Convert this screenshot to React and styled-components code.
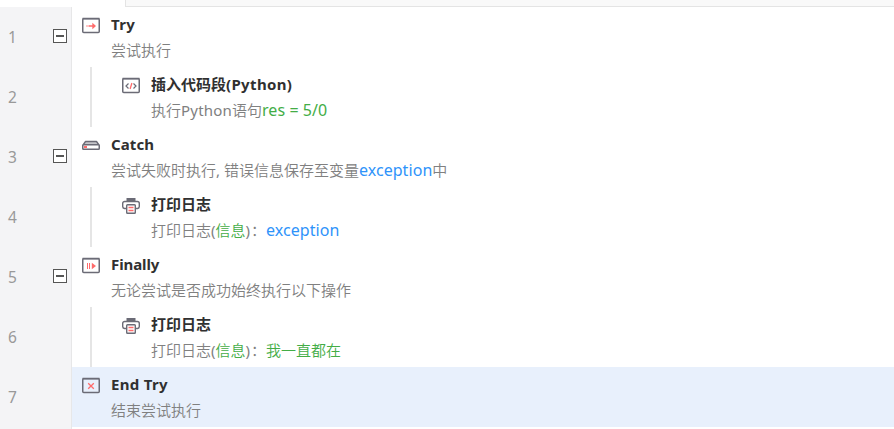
import React from 'react';
import styled, { createGlobalStyle } from 'styled-components';

const GlobalStyle = createGlobalStyle`
  * { box-sizing: border-box; }
  body { margin: 0; background: #fff; overflow: hidden; }
`;

const Editor = styled.div`
  width: 894px;
  height: 429px;
  display: flex;
  flex-direction: column;
  background: #fff;
  overflow: hidden;
  font-family: "Noto Sans", "Noto Sans CJK SC", sans-serif;
  font-size: 15px;
`;

const TabStrip = styled.div`
  display: flex;
  justify-content: flex-end;
  flex: 0 0 7px;
`;

const TabRest = styled.div`
  width: 769px;
  background: #f9f9f9;
  border-left: 1px solid #e4e4e4;
  border-bottom: 1px solid #e4e4e4;
`;

const Body = styled.div`
  display: flex;
  flex: 1;
  min-height: 0;
`;

const Gutter = styled.div`
  flex: 0 0 72px;
  background: #f4f4f6;
  border-right: 1px solid #e7e7e8;
`;

const GutterRow = styled.div`
  height: 60px;
  display: flex;
  justify-content: space-between;
  align-items: center;
  padding: 0 4px 0 8px;
  color: #999;
`;

const LineNumber = styled.span`
  font-size: 15.5px;
  line-height: 20px;
`;

const Toggle = styled.span`
  width: 14px;
  height: 14px;
  border: 1px solid #555;
  background: #fff;
  display: flex;
  align-items: center;
  justify-content: center;
  margin-bottom: 2px;
  &::before {
    content: "";
    width: 8px;
    height: 2px;
    background: #555;
  }
`;

const Steps = styled.div`
  flex: 1;
  min-width: 0;
`;

const Step = styled.div`
  height: 60px;
  display: flex;
  padding-left: ${(p) => (p.$nested ? 18 : 9)}px;
  background: ${(p) => (p.$selected ? '#e8f0fc' : 'transparent')};
`;

const Guide = styled.div`
  width: 2px;
  margin-right: 29px;
  background: #e5e5e5;
`;

const IconSlot = styled.div`
  width: 20px;
  margin-right: 10px;
  padding-top: 8px;
  svg { display: block; }
`;

const StepText = styled.div`
  padding-top: 4px;
  white-space: nowrap;
`;

const Title = styled.div`
  height: 26px;
  line-height: 26px;
  font-weight: 700;
  color: #303030;
  letter-spacing: ${(p) => p.$track || 0}px;
`;

const Detail = styled.div`
  height: 26px;
  line-height: 26px;
  color: #808080;
  font-family: "Noto Sans", "Noto Sans CJK SC DemiLight", "Noto Sans CJK SC", sans-serif;
`;

const Latin = styled.span`
  letter-spacing: ${(p) => (p.$bold ? 0.35 : 0.2)}px;
`;

const Value = styled.span`
  color: ${(p) => (p.$variable ? '#2e93fa' : '#43ad46')};
  font-size: ${(p) => (p.$latin ? 16 : 15)}px;
  letter-spacing: ${(p) => (p.$latin ? 0.06 : 0)}px;
`;

const Colon = styled.span`
  display: inline-block;
  width: 16px;
  padding-left: 1px;
`;

const DARK = '#6b6b76';
const RED = '#ff6b6b';

function Frame({ children }) {
  return (
    <svg width="20" height="20" viewBox="0 0 20 20" fill="none">
      <rect x="1.75" y="3.75" width="16.5" height="13.7" rx="1" stroke={DARK} strokeWidth="1.5" />
      <path d="M1.5 3.5h17" stroke={DARK} strokeWidth="1.5" />
      {children}
    </svg>
  );
}

const TryIcon = () => (
  <Frame>
    <path d="M5.5 11h1M7.5 11h5" stroke={RED} strokeWidth="1.6" />
    <path d="M11.3 7.8v6.4l3.7-3.2z" fill={RED} />
  </Frame>
);

const CodeIcon = () => (
  <Frame>
    <path d="M7.5 8.5L5 11l2.5 2.5M12.5 8.5L15 11l-2.5 2.5" stroke={DARK} strokeWidth="1.2" />
    <path d="M10.9 8l-1.800 6" stroke={RED} strokeWidth="1.3" />
  </Frame>
);

const FinallyIcon = () => (
  <Frame>
    <path d="M6.5 8v6M8.5 8v6" stroke={RED} strokeWidth="1" />
    <path d="M10.8 7.8v6.4l4.200-3.200z" fill={RED} />
  </Frame>
);

const EndIcon = () => (
  <Frame>
    <path d="M7.2 8.2l5.600 5.600M12.8 8.2l-5.600 5.600" stroke={RED} strokeWidth="1.3" />
  </Frame>
);

const CatchIcon = () => (
  <svg width="20" height="20" viewBox="0 0 20 20" fill="none">
    <path d="M4.500 6h11l2.500 4H2z" fill="#c5c5ca" />
    <path d="M2 10l2.500-3.500h11L18 10" stroke={DARK} strokeWidth="1.300" strokeLinejoin="round" />
    <rect x="1.750" y="9.750" width="16.500" height="4.500" rx="0.800" fill="#fff" stroke={DARK} strokeWidth="1.500" />
    <path d="M3 12h3" stroke={RED} strokeWidth="2" />
  </svg>
);

const PrintIcon = () => (
  <svg width="20" height="20" viewBox="0 0 20 20" fill="none">
    <path d="M5.500 3h9v4h-9z" fill={DARK} />
    <path d="M5 13.500H3.500A1.900 1.900 0 0 1 1.700 11.600V8.500A2 2 0 0 1 3.700 6.500h12.600a2 2 0 0 1 2 2v3.100a1.900 1.900 0 0 1-1.800 1.900H15" stroke={DARK} strokeWidth="1.400" />
    <rect x="5.700" y="9.700" width="8.600" height="8.600" rx="0.800" stroke={DARK} strokeWidth="1.400" />
    <path d="M7.500 12.500h5M7.500 15.500h5" stroke={RED} strokeWidth="1.300" />
  </svg>
);

const steps = [
  { icon: TryIcon, title: 'Try', track: 0.3, detail: '尝试执行', group: true },
  {
    icon: CodeIcon, title: <>插入代码段<Latin $bold>(Python)</Latin></>, nested: true,
    detail: <>执行<Latin>Python</Latin>语句<Value $latin>res = 5/0</Value></>,
  },
  {
    icon: CatchIcon, title: 'Catch', track: 0.1, group: true,
    detail: <>尝试失败时执行, 错误信息保存至变量<Value $variable $latin>exception</Value>中</>,
  },
  {
    icon: PrintIcon, title: '打印日志', nested: true,
    detail: <>打印日志(<Value>信息</Value>)<Colon>：</Colon><Value $variable $latin>exception</Value></>,
  },
  { icon: FinallyIcon, title: 'Finally', track: -0.1, detail: '无论尝试是否成功始终执行以下操作', group: true },
  {
    icon: PrintIcon, title: '打印日志', nested: true,
    detail: <>打印日志(<Value>信息</Value>)<Colon>：</Colon><Value>我一直都在</Value></>,
  },
  { icon: EndIcon, title: 'End Try', track: 0.3, detail: '结束尝试执行', selected: true },
];

export default function App() {
  return (
    <Editor>
      <GlobalStyle />
      <TabStrip><TabRest /></TabStrip>
      <Body>
        <Gutter>
          {steps.map((step, i) => (
            <GutterRow key={i}>
              <LineNumber>{i + 1}</LineNumber>
              {step.group && <Toggle />}
            </GutterRow>
          ))}
        </Gutter>
        <Steps>
          {steps.map(({ icon: Icon, title, track, detail, nested, selected }, i) => (
            <Step key={i} $nested={nested} $selected={selected}>
              {nested && <Guide />}
              <IconSlot><Icon /></IconSlot>
              <StepText>
                <Title $track={track}>{title}</Title>
                <Detail>{detail}</Detail>
              </StepText>
            </Step>
          ))}
        </Steps>
      </Body>
    </Editor>
  );
}
